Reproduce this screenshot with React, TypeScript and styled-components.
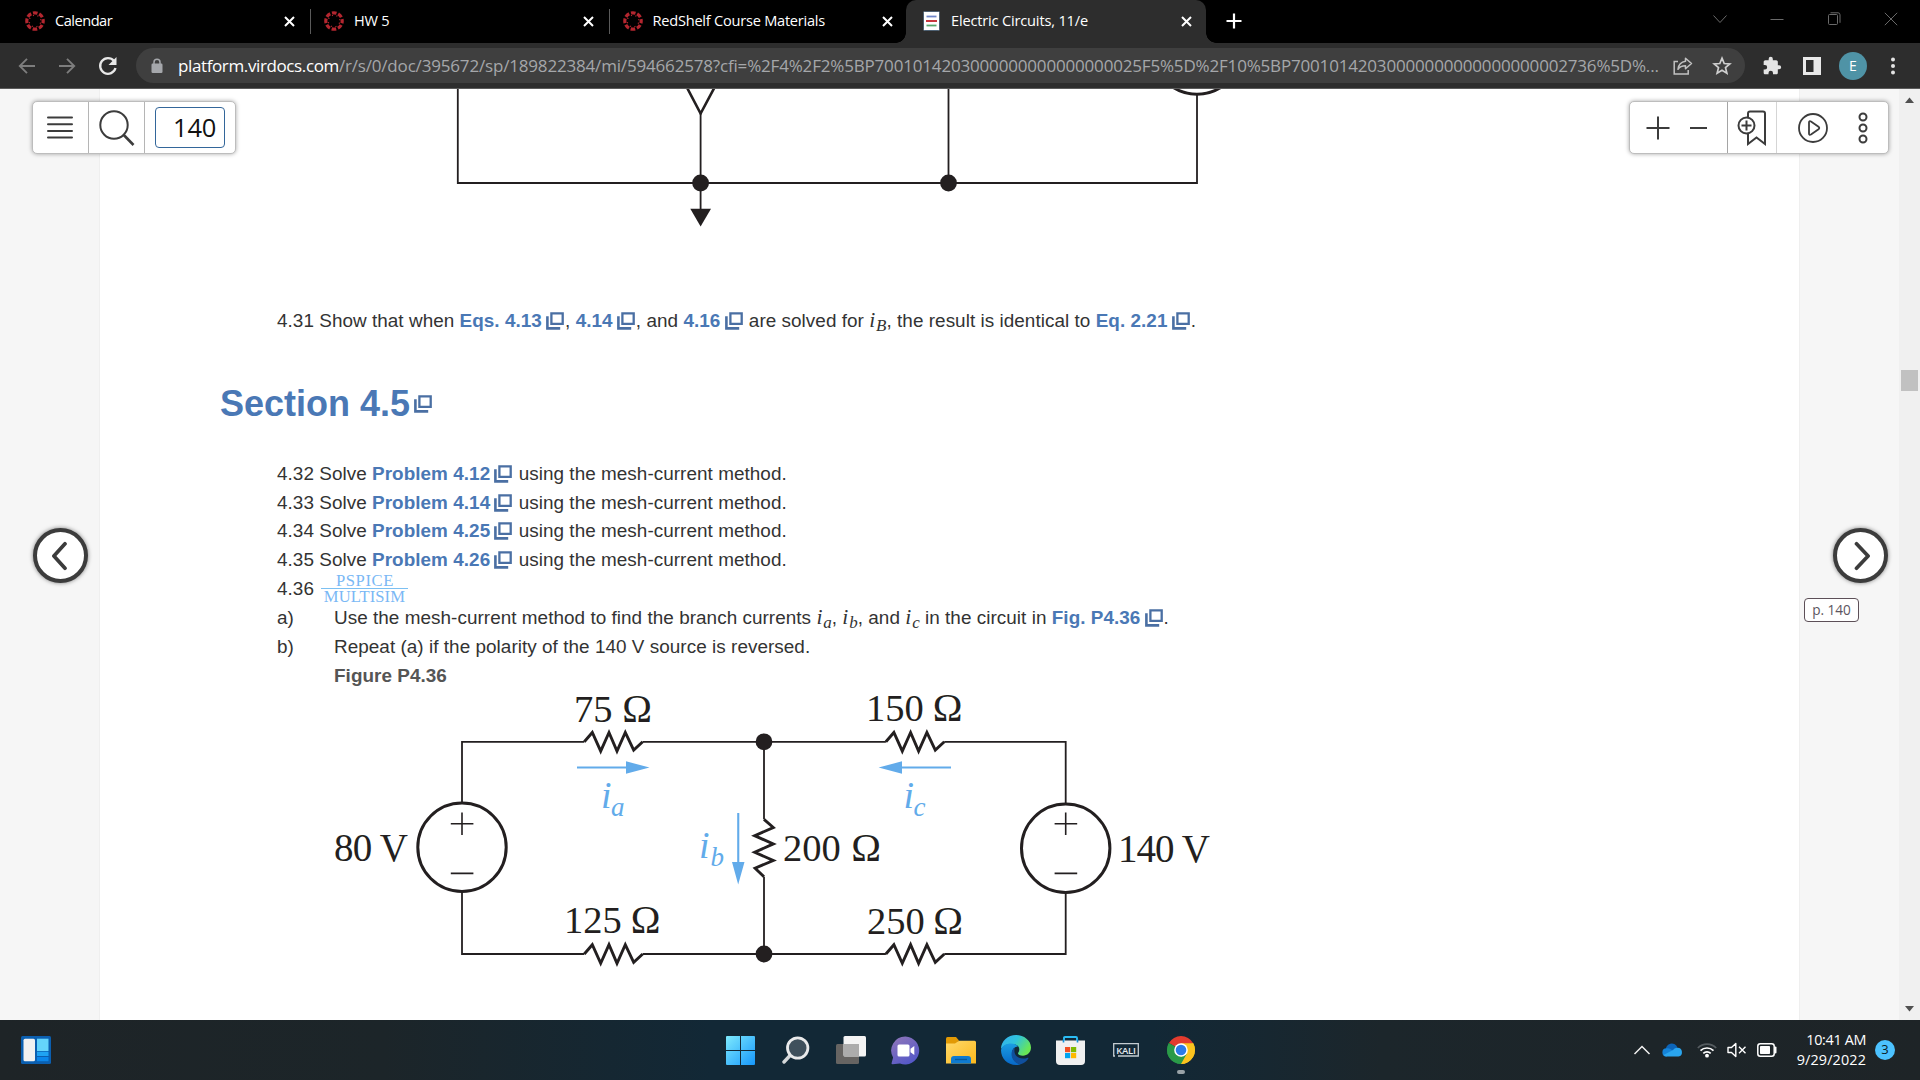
import React from "react";
import styled, { createGlobalStyle } from "styled-components";

const uiFont = `"Open Sans", "Noto Sans", sans-serif`;
const bookFont = `"Liberation Sans", Arial, sans-serif`;
const mathFont = `"Liberation Serif", "Times New Roman", serif`;
const ink = "#231f20";
const sky = "#62abea";

const Global = createGlobalStyle`
  * { box-sizing: border-box; }
  body { margin: 0; background: #fff; overflow: hidden; }
  svg { display: block; flex: none; }
`;

const Screen = styled.div`
  display: grid;
  grid-template-rows: 43px 46px 931px 60px;
  width: 1920px;
  height: 1080px;
  font-family: ${uiFont};
`;

/* ---------- browser tabs ---------- */

const TabStrip = styled.div`
  display: flex;
  background: #000;
  color: #fff;
`;

const Tab = styled.div<{ $width: number; $active?: boolean; $pad: number; $end: number }>`
  display: flex;
  align-items: center;
  width: ${(p) => p.$width}px;
  height: 43px;
  padding: 0 ${(p) => p.$end}px 1px ${(p) => p.$pad}px;
  position: relative;
  background: ${(p) => (p.$active ? "#2d2d2d" : "transparent")};
  border-radius: 10px 10px 0 0;
  &::before, &::after {
    content: "";
    display: ${(p) => (p.$active ? "block" : "none")};
    position: absolute;
    bottom: 0;
    width: 10px;
    height: 10px;
  }
  &::before { left: -10px; background: radial-gradient(circle at 0 0, transparent 9.5px, #2d2d2d 10px); }
  &::after { right: -10px; background: radial-gradient(circle at 100% 0, transparent 9.5px, #2d2d2d 10px); }
`;

const TabTitle = styled.span<{ $gap: number; $ls: number }>`
  flex: 1;
  margin-left: ${(p) => p.$gap}px;
  padding-bottom: 2px;
  font-size: 14.6px;
  letter-spacing: ${(p) => p.$ls}px;
  white-space: nowrap;
`;

const TabLine = styled.i`
  width: 1px;
  height: 25px;
  margin-top: 9px;
  background: #5a5a5a;
`;

const NewTab = styled.div`
  display: flex;
  align-items: center;
  margin-left: 19.5px;
  padding-bottom: 1px;
  flex: 1;
`;

const WindowButtons = styled.div`
  display: flex;
  align-items: center;
  height: 37px;
  gap: 41px;
  padding-right: 22px;
  svg:last-child { margin-left: 2px; }
`;

/* ---------- address row ---------- */

const Toolbar = styled.div`
  display: flex;
  align-items: center;
  background: #2d2d2d;
  border-bottom: 1px solid #5b5b5b;
  padding: 0 19px 0 18px;
`;

const NavButtons = styled.div`
  display: flex;
  align-items: center;
  gap: 22px;
  width: 118px;
`;

const AddressBar = styled.div`
  display: flex;
  align-items: center;
  width: 1609px;
  height: 35px;
  border-radius: 17.5px;
  background: #3f3f3f;
  padding: 0 13px 0 15px;
`;

const Url = styled.div`
  flex: 1;
  margin-left: 15px;
  padding-bottom: 1px;
  font-size: 17px;
  white-space: nowrap;
  color: #a5a7aa;
`;

const Domain = styled.span`
  color: #fff;
  letter-spacing: -0.38px;
`;

const Path = styled.span`
  letter-spacing: -0.175px;
`;

const BarIcons = styled.div`
  display: flex;
  align-items: center;
  gap: 19px;
`;

const Extensions = styled.div`
  display: flex;
  align-items: center;
  flex: 1;
  margin-left: 17px;
  svg:nth-child(2) { margin-left: 21px; }
  svg:last-child { margin-left: 22.5px; }
`;

const Avatar = styled.div`
  display: flex;
  align-items: center;
  justify-content: center;
  width: 28px;
  height: 28px;
  margin-left: 18px;
  border-radius: 50%;
  background: #4f93a6;
  color: #fff;
  font: 14px ${uiFont};
`;

/* ---------- reader ---------- */

const Reader = styled.main`
  display: grid;
  grid-template-columns: 100px 1699px 100px 21px;
  position: relative;
  overflow: hidden;
`;

const Gutter = styled.div<{ $side: "left" | "right" }>`
  background: #f6f6f6;
  border-${(p) => (p.$side === "left" ? "right" : "left")}: 1px solid #efefef;
`;

const Page = styled.article`
  background: #fff;
  padding-left: 120px;
  font-family: ${bookFont};
  font-size: 18.9px;
  line-height: 28.7px;
  letter-spacing: 0.045px;
  color: #333;
`;

const TopFigure = styled.div`
  height: 217.5px;
  margin-left: 230px;
`;

const Problems = styled.div<{ $after: number }>`
  padding-left: 57px;
  margin-bottom: ${(p) => p.$after}px;
`;

const Row = styled.div`
  height: 28.7px;
  white-space: nowrap;
`;

const FractionRow = styled(Row)`
  height: 29.5px;
`;

const PartRow = styled(Row)`
  display: grid;
  grid-template-columns: 57px 1fr;
`;

const Heading = styled.h2`
  display: flex;
  align-items: center;
  height: 42px;
  margin: 0 0 35.2px;
  font-size: 36px;
  line-height: 42px;
  letter-spacing: 0;
  color: #4a78b5;
  svg { margin: 0 0 0 3.5px; }
`;

const Link = styled.a`
  color: #4a78b5;
  font-weight: bold;
  svg {
    display: inline-block;
    vertical-align: -3px;
    margin: 0 1px 0 4.2px;
  }
`;

const MathVar = styled.i`
  font-family: ${mathFont};
  font-size: 21.5px;
  line-height: 0;
  letter-spacing: 0.9px;
  sub {
    font-size: 17px;
    line-height: 0;
    vertical-align: -3.5px;
    letter-spacing: 0;
  }
`;

const Fraction = styled.span`
  display: inline-flex;
  flex-direction: column;
  align-items: center;
  width: 87px;
  height: 29px;
  margin-left: 7px;
  vertical-align: top;
  font-family: ${mathFont};
  color: #7ab8f5;
  font-size: 16.6px;
`;

const Numerator = styled.span`
  height: 15px;
  line-height: 12.4px;
  width: 100%;
  padding-left: 1px;
  text-align: center;
  letter-spacing: 0.6px;
  border-bottom: 1.3px solid #7cc0f2;
`;

const Denominator = styled.span`
  line-height: 15px;
  letter-spacing: 0.1px;
`;

const Caption = styled(Row)`
  height: 28px;
  line-height: 27.5px;
  padding-left: 57px;
  font-weight: bold;
  color: #555;
`;

const LowerFigure = styled.div`
  margin: -5.4px 0 0 110px;
`;

const Scroll = styled.div`
  display: flex;
  flex-direction: column;
  align-items: center;
  background: #f0f0f0;
  padding: 8px 0;
`;

const Thumb = styled.div`
  width: 17px;
  height: 21px;
  margin: 267px 0 auto;
  background: #c1c1c1;
`;

/* Panels floating above the page */
const Floating = styled.div<{ $left: number; $width: number }>`
  position: absolute;
  top: 12px;
  left: ${(p) => p.$left}px;
  display: flex;
  width: ${(p) => p.$width}px;
  height: 53px;
  background: #fff;
  border: 1px solid #bdbdbd;
  border-radius: 5px;
  box-shadow: 0 0 4px rgba(0, 0, 0, 0.35);
`;

const Cell = styled.div<{ $width: number; $line?: string; $gap?: number; $end?: number }>`
  display: flex;
  align-items: center;
  justify-content: center;
  gap: ${(p) => p.$gap ?? 0}px;
  width: ${(p) => p.$width}px;
  padding-right: ${(p) => p.$end ?? 0}px;
  border-right: ${(p) => (p.$line ? `1px solid ${p.$line}` : "0")};
`;

const PageInput = styled.div`
  width: 70px;
  height: 41px;
  padding-left: 17px;
  border: 1.5px solid #33669a;
  border-radius: 4px;
  font-size: 25.5px;
  line-height: 39px;
  letter-spacing: -0.2px;
  color: #111;
`;

const Turn = styled.div<{ $left: number }>`
  position: absolute;
  top: 439px;
  left: ${(p) => p.$left}px;
  width: 55px;
  height: 55px;
  display: flex;
  align-items: center;
  justify-content: center;
  background: #fff;
  border: 4px solid #3c3c3c;
  border-radius: 50%;
  box-shadow: 0 0 4px rgba(0, 0, 0, 0.5);
`;

const PageTag = styled.div`
  position: absolute;
  left: 1804px;
  top: 509px;
  width: 55px;
  height: 24px;
  border: 1px solid #5d5058;
  border-radius: 4px;
  background: #fff;
  color: #5d5560;
  font: 13.6px/22px ${uiFont};
  text-align: center;
`;

/* ---------- taskbar ---------- */

const Taskbar = styled.footer`
  display: grid;
  grid-template-columns: 713px 495px 1fr;
  align-items: center;
  background: linear-gradient(90deg, #1e2427 0, #1c2529 20%, #122836 37%, #122836 60%, #1c262b 72%, #1e2427 100%);
`;

const Widgets = styled.div`
  padding-left: 21px;
`;

const Apps = styled.div`
  display: grid;
  grid-template-columns: repeat(9, 55px);
  height: 60px;
`;

const AppSlot = styled.div`
  display: flex;
  align-items: center;
  justify-content: center;
  position: relative;
`;

const Running = styled.i`
  position: absolute;
  bottom: 6px;
  width: 8px;
  height: 4px;
  border-radius: 2px;
  background: #9aa3a8;
`;

const Tray = styled.div`
  display: flex;
  align-items: center;
  justify-content: flex-end;
  padding-right: 25px;
  color: #fff;
`;

const TrayGap = styled.i<{ $w: number }>`
  width: ${(p) => p.$w}px;
`;

const Clock = styled.div`
  display: flex;
  flex-direction: column;
  width: 88px;
  margin-right: 9px;
  font-size: 14.4px;
  line-height: 20px;
  text-align: right;
  white-space: nowrap;
`;

const ClockLine = styled.span<{ $ls: number }>`
  letter-spacing: ${(p) => p.$ls}px;
`;

const Count = styled.div`
  width: 20px;
  height: 20px;
  border-radius: 50%;
  background: #4cc2ff;
  color: #0b1c26;
  font: 13px/19px ${uiFont};
  text-align: center;
`;

/* ---------- drawings ---------- */

const Canvas = () => (
  <svg width="20" height="20" viewBox="0 0 20 20">
    <circle cx="10" cy="10" r="8.2" fill="none" stroke="#b3262f" strokeWidth="3.2" strokeDasharray="4.6 1.84" strokeDashoffset="2.3" />
    <circle cx="10" cy="10" r="5.8" fill="none" stroke="#b3262f" strokeWidth="1.2" strokeDasharray="1.1 3.455" strokeDashoffset="2.8" />
  </svg>
);

const Book = () => (
  <svg width="17" height="20" viewBox="0 0 17 20">
    <rect x=".5" y=".5" width="16" height="19" rx="1" fill="#fff" stroke="#4d6072" />
    <path d="M3.5 5.5h10" stroke="#6f86c9" strokeWidth="1.8" />
    <path d="M3 10h11" stroke="#c8373f" strokeWidth="2" />
    <path d="M3.5 14.5h10" stroke="#57a66d" strokeWidth="1.8" />
  </svg>
);

const Cross = () => (
  <svg width="11" height="11" viewBox="0 0 11 11">
    <path d="M1 1l9 9M10 1l-9 9" stroke="#fff" strokeWidth="2" />
  </svg>
);

const Popup = () => (
  <svg width="18" height="18" viewBox="0 0 18 18">
    <path d="M5.4 1.3h11.3v10.6H5.4z" fill="none" stroke="#4a6fa3" strokeWidth="2.3" />
    <path d="M1.4 4.2v12.2h12.8" fill="none" stroke="#4a6fa3" strokeWidth="2.6" />
  </svg>
);

const Upper = () => (
  <svg width="780" height="145" viewBox="450 89 780 145" fill="none" stroke={ink}>
    <path d="M457.800 80V183H1197V94M700.6 113V215M948.5 80V183" strokeWidth="1.8" />
    <path d="M683 80L700.6 113.5L718.5 80" strokeWidth="2.6" />
    <circle cx="1197" cy="49.7" r="44.5" strokeWidth="3" />
    <g fill={ink} stroke="none">
      <circle cx="700.6" cy="183" r="8.4" />
      <circle cx="948.5" cy="183" r="8.4" />
      <path d="M690.3 208.7H711L700.6 226.5z" />
    </g>
  </svg>
);

const zigH = (x: number, y: number) =>
  `M${x} ${y}l8 -9.3l8.4 18.6l8.3 -18.6l8 18.6l8.3 -18.6l8.4 17.6l9 -8.3`;

const Ohms = ({ x, end, y, value }: { x: number; end: number; y: number; value: string }) => (
  <text y={y}>
    <tspan x={x} fontSize="38.500">{value} </tspan>
    <tspan x={end} textAnchor="end" fontSize="40">Ω</tspan>
  </text>
);

const Lower = () => (
  <svg width="890" height="296" viewBox="330 684 890 296">
    <g fill="none" stroke={ink} strokeWidth="1.8">
      <path d="M584.3 741.8H462V802M462 891.5V954H584.3M642.7 741.8H885.9M642.7 954H885.9M944.3 741.8H1065.7V803M1065.7 893V954H944.3" />
      <path d="M764 741.8V819.3M764 876.7V954" />
      <path d="M450.8 823.7H473.4M462 812.4V835M450.8 873.4H473.4M1054.6 823.7H1077.2M1065.7 812.4V835M1054.6 873.4H1077.2" strokeWidth="1.6" />
    </g>
    <g fill="none" stroke={ink} strokeWidth="2.9" strokeLinejoin="miter">
      <path d={zigH(584.3, 741.8)} />
      <path d={zigH(885.9, 741.8)} />
      <path d={zigH(584.3, 954)} />
      <path d={zigH(885.9, 954)} />
      <path d="M764 819.3l9.3 8.2l-18.6 8.2l18.6 8.2l-18.6 8.4l18.6 8.2l-18.2 7.7l8.9 8.5" />
      <circle cx="462" cy="847.3" r="44.2" strokeWidth="3" />
      <circle cx="1065.7" cy="848.3" r="44.2" strokeWidth="3" />
    </g>
    <circle cx="764" cy="741.8" r="8.4" fill={ink} />
    <circle cx="764" cy="954" r="8.4" fill={ink} />
    <g fill={sky}>
      <path d="M577 766.5H626V761.3L649.5 767.5L626 773.8V768.6H577z" />
      <path d="M951 766.5H902V761.3L878.6 767.5L902 773.8V768.6H951z" />
      <path d="M737.2 813V862H732L738.2 884.5L744.5 862H739.3V813z" />
    </g>
    <g fill={ink} fontFamily={mathFont} fontSize="39">
      <Ohms x={574} end={652} y={721.5} value="75" />
      <Ohms x={866} end={962.5} y={721.3} value="150" />
      <Ohms x={564} end={660.5} y={933.3} value="125" />
      <Ohms x={867} end={963} y={934} value="250" />
      <Ohms x={783} end={881} y={860.7} value="200" />
      <text x="334" y="861" textLength="74" lengthAdjust="spacing">80 V</text>
      <text x="1118" y="862.3" textLength="92" lengthAdjust="spacing">140 V</text>
    </g>
    <g fill={sky} fontFamily={mathFont} fontStyle="italic" fontSize="38">
      <text x="601" y="808">i</text>
      <text x="903.5" y="808">i</text>
      <text x="699" y="858">i</text>
      <g fontSize="27">
        <text x="611" y="815.8">a</text>
        <text x="913.5" y="815.8">c</text>
        <text x="710.5" y="865.5">b</text>
      </g>
    </g>
  </svg>
);

const appIcons: React.ReactNode[] = [
  <svg key="win" width="29" height="29" viewBox="0 0 29 29">
    <defs>
      <linearGradient id="w" gradientUnits="userSpaceOnUse" x1="0" y1="0" x2="29" y2="29">
        <stop offset="0" stopColor="#7eeafd" /><stop offset="1" stopColor="#1697fb" />
      </linearGradient>
    </defs>
    <path d="M0 1q0-1 1-1h13v14H0zM15 0h13q1 0 1 1v13H15zM0 15h14v14H1q-1 0-1-1zM15 15h14v13q0 1-1 1H15z" fill="url(#w)" />
  </svg>,
  <svg key="search" width="28" height="28" viewBox="0 0 28 28">
    <path d="M8.5 19L2 26" stroke="#d5d8da" strokeWidth="3.4" strokeLinecap="round" />
    <circle cx="15.7" cy="12" r="10.2" fill="#3f505c" stroke="#e9eaeb" strokeWidth="2.8" />
  </svg>,
  <svg key="view" width="30" height="28" viewBox="0 0 30 28">
    <rect x="0" y="8" width="23" height="20" rx="1.5" fill="#666462" />
    <rect x="7.5" y="0" width="22.5" height="20.5" rx="1.5" fill="#f4f4f4" />
    <path d="M7.5 8H23v12.5H9q-1.500 0-1.500-1.500z" fill="#acacac" />
  </svg>,
  <svg key="chat" width="29" height="29" viewBox="0 0 29 29">
    <defs>
      <linearGradient id="c" x1="0" y1="0" x2=".6" y2="1">
        <stop offset="0" stopColor="#9277b8" /><stop offset="1" stopColor="#5558c8" />
      </linearGradient>
    </defs>
    <path d="M14.500 .5a14 14 0 1 1-5.500 27L1.500 28.300q-1.200 0-.9-1.300l1.500-5.500A14 14 0 0 1 14.500 .5z" fill="url(#c)" />
    <rect x="6.500" y="8.500" width="12" height="12" rx="1.500" fill="#fff" />
    <path d="M19.500 12.800l3.800-2.800v9l-3.800-2.800z" fill="#fff" />
  </svg>,
  <svg key="files" width="30" height="27" viewBox="0 0 30 27">
    <defs>
      <linearGradient id="f" x1="0" y1="0" x2="1" y2="1">
        <stop offset="0" stopColor="#ffd96b" /><stop offset="1" stopColor="#fcb91c" />
      </linearGradient>
    </defs>
    <path d="M0 7V1.500Q0 0 1.500 0H10l3 3.500L10 7z" fill="#e29a05" />
    <path d="M0 6.500H9L13 3.800H28.500Q30 3.800 30 5.300V26.500H0z" fill="url(#f)" />
    <path d="M5 26.500V22q0-3 3-3H22q3 0 3 3v4.500z" fill="#0f7bd0" />
    <path d="M9 22.500H21" stroke="#075a9c" strokeWidth="1.300" />
  </svg>,
  <svg key="edge" width="30" height="30" viewBox="0 0 30 30">
    <defs>
      <linearGradient id="e1" x1="0" y1="0" x2="1" y2=".5">
        <stop offset="0" stopColor="#35aef0" /><stop offset=".5" stopColor="#2fc3dc" /><stop offset="1" stopColor="#69e655" />
      </linearGradient>
      <linearGradient id="e2" x1="0" y1="0" x2="0" y2="1">
        <stop offset="0" stopColor="#1b9de2" /><stop offset="1" stopColor="#0768c8" />
      </linearGradient>
    </defs>
    <path d="M0 14C0 6 7 0 15 0s15 5.500 15 12.500c0 5-4 8.200-8 8.200-3 0-5-1-5-2.200 0-1 1.300-1.600 1.300-4.300 0-3.200-3.300-5.200-7.300-5.200-5 0-9 2-11 5z" fill="url(#e1)" />
    <path d="M0 15C1 10.500 5.500 8.500 10 8.500c3.200 0 5.500 1 7 3-3.500 0-6 3-6 7 0 6 5 10.500 9 10.700-1.500.5-3 .8-5 .8C6.500 30 0 23.500 0 15z" fill="url(#e2)" />
    <path d="M13.500 12.500c-2 1.500-3 4-3 6.500 0 6 5 10.800 10 10 3-1 5.500-3.300 6.800-5.500.5-.8-.2-1-.8-.8-6 2.500-12.500-.5-13-5.700-.1-1.700 0-3.200 0-4.500z" fill="#104f9c" />
  </svg>,
  <svg key="store" width="29" height="29" viewBox="0 0 29 29">
    <path d="M8 6V2q0-1 1-1H20q1 0 1 1V6" fill="none" stroke="#2bbdf5" strokeWidth="1.900" />
    <path d="M0 4.500H29V25q0 4-4 4H4q-4 0-4-4z" fill="#f0f0f0" />
    <path d="M7.500 3.500V6.500M21.500 3.500V6.500" stroke="#1392d8" strokeWidth="1.600" />
    <path d="M9 11h5.200v5.200H9z" fill="#f25022" /><path d="M15 11h5.200v5.200H15z" fill="#7fba00" />
    <path d="M9 17h5.200v5.200H9z" fill="#00a4ef" /><path d="M15 17h5.200v5.200H15z" fill="#ffb900" />
  </svg>,
  <svg key="kali" width="26" height="14" viewBox="0 0 26 14">
    <path d="M2 13H.7V.7H25.300V13H5" fill="none" stroke="#c4ccd1" strokeWidth="1.300" />
    <text x="3.300" y="10.500" textLength="19.500" fontFamily={uiFont} fontWeight="600" fontSize="9.500" fill="#e6ebee">KALI</text>
  </svg>,
  <svg key="chrome" width="28" height="28" viewBox="0 0 28 28">
    <path d="M14 14L1.900 7A14 14 0 0 1 26.100 7z" fill="#e33b2e" />
    <path d="M14 14L26.100 7A14 14 0 0 1 14 28z" fill="#fcc31e" />
    <path d="M14 14L14 28A14 14 0 0 1 1.900 7z" fill="#2a9a48" />
    <path d="M14 7.200H26.200A14 14 0 0 1 14 28L19.900 17.400z" fill="#fcc31e" />
    <path d="M1.900 7L8.100 17.400L14 20.800L19.900 17.400L14 28A14 14 0 0 1 1.900 7z" fill="#2a9a48" />
    <circle cx="14" cy="14" r="6.800" fill="#fff" />
    <circle cx="14" cy="14" r="5.300" fill="#2c7be8" />
  </svg>,
];

const solveRows = [
  ["4.32", "4.12"],
  ["4.33", "4.14"],
  ["4.34", "4.25"],
  ["4.35", "4.26"],
];

export default function App() {
  return (
    <Screen>
      <Global />
      <TabStrip>
        <Tab $width={310} $pad={25} $end={15}><Canvas /><TabTitle $gap={10} $ls={-0.5}>Calendar</TabTitle><Cross /></Tab>
        <TabLine />
        <Tab $width={298} $pad={13} $end={15}><Canvas /><TabTitle $gap={10} $ls={-0.25}>HW 5</TabTitle><Cross /></Tab>
        <TabLine />
        <Tab $width={296} $pad={13} $end={13}><Canvas /><TabTitle $gap={9.5} $ls={-0.24}>RedShelf Course Materials</TabTitle><Cross /></Tab>
        <Tab $width={300} $pad={17} $end={14} $active><Book /><TabTitle $gap={11} $ls={-0.18}>Electric Circuits, 11/e</TabTitle><Cross /></Tab>
        <NewTab>
          <svg width="16" height="16" viewBox="0 0 16 16"><path d="M8 .5v15M.5 8h15" stroke="#fff" strokeWidth="2.200" /></svg>
        </NewTab>
        <WindowButtons>
          <svg width="14" height="14" viewBox="0 0 14 14"><path d="M.5 3.500L7 10.500L13.500 3.500" fill="none" stroke="#6a6a6a" /></svg>
          <svg width="18" height="14" viewBox="0 0 18 14"><path d="M2.500 7.500h13" stroke="#6a6a6a" /></svg>
          <svg width="14" height="14" viewBox="0 0 14 14"><path d="M1.500 3.500q0-1 1-1h7q1 0 1 1v8q0 1-1 1h-7q-1 0-1-1zM3.500 .8H11q2 0 2 2v8" fill="none" stroke="#6a6a6a" /></svg>
          <svg width="14" height="14" viewBox="0 0 14 14"><path d="M.8.800l12.400 12.400M13.200.800L.8 13.200" stroke="#6a6a6a" /></svg>
        </WindowButtons>
      </TabStrip>

      <Toolbar>
        <NavButtons>
          <svg width="18" height="18" viewBox="0 0 18 18"><path d="M17 9H2M9 1.800L1.800 9L9 16.200" fill="none" stroke="#7d7d7d" strokeWidth="1.900" /></svg>
          <svg width="18" height="18" viewBox="0 0 18 18"><path d="M1 9h15M9 1.800L16.200 9L9 16.200" fill="none" stroke="#7d7d7d" strokeWidth="1.900" /></svg>
          <svg width="20" height="20" viewBox="0 0 20 20">
            <path d="M16 5A7.800 7.800 0 1 0 17.500 12" fill="none" stroke="#e8e8e8" strokeWidth="2.300" />
            <path d="M18.500 1V9H10.500z" fill="#e8e8e8" />
          </svg>
        </NavButtons>
        <AddressBar>
          <svg width="12" height="16" viewBox="0 0 12 16">
            <path d="M3 7V4.200a3 3 0 0 1 6 0V7" fill="none" stroke="#a5a7ab" strokeWidth="1.500" />
            <rect x=".5" y="5.500" width="11" height="9.500" rx="1.200" fill="#a5a7ab" />
          </svg>
          <Url>
            <Domain>platform.virdocs.com</Domain>
            <Path>/r/s/0/doc/395672/sp/189822384/mi/594662578?cfi=%2F4%2F2%5BP7001014203000000000000000025F5%5D%2F10%5BP70010142030000000000000000002736%5D%...</Path>
          </Url>
          <BarIcons>
            <svg width="20" height="18" viewBox="0 0 20 18">
              <path d="M5 4.500H1.200V17H15.200V13" fill="none" stroke="#c2c2c2" strokeWidth="1.500" />
              <path d="M12.500 1.200L18.500 6.500L12.500 11.800V8.800C9 8.800 6.500 10 5 12.300C5.500 8 8 4.900 12.500 4.300z" fill="none" stroke="#c2c2c2" strokeWidth="1.500" strokeLinejoin="round" />
            </svg>
            <svg width="20" height="20" viewBox="0 0 20 20">
              <path d="M10 2.200L12.200 7.500L17.800 7.900L13.500 11.600L14.900 17.200L10 14.200L5.100 17.200L6.500 11.600L2.200 7.900L7.800 7.500z" fill="none" stroke="#cfcfcf" strokeWidth="1.700" />
            </svg>
          </BarIcons>
        </AddressBar>
        <Extensions>
          <svg width="20" height="20" viewBox="0 0 24 24">
            <path fill="#e4e4e4" d="M20.500 11H19V7c0-1.100-.9-2-2-2h-4V3.500a2.500 2.500 0 0 0-5 0V5H4c-1.100 0-2 .9-2 2v3.800h1.500a2.700 2.700 0 0 1 0 5.400H2V20c0 1.100.9 2 2 2h3.800v-1.500a2.700 2.700 0 0 1 5.400 0V22H17c1.100 0 2-.9 2-2v-4h1.500a2.500 2.500 0 0 0 0-5z" />
          </svg>
          <svg width="18" height="18" viewBox="0 0 18 18"><path fillRule="evenodd" d="M0 0H18V18H0zM3 3V15H10.500V3z" fill="#e8e8e8" /></svg>
          <Avatar>E</Avatar>
          <svg width="6" height="18" viewBox="0 0 6 18" fill="#e4e4e4"><circle cx="3" cy="2.500" r="2" /><circle cx="3" cy="9" r="2" /><circle cx="3" cy="15.500" r="2" /></svg>
        </Extensions>
      </Toolbar>

      <Reader>
        <Gutter $side="left" />
        <Page>
          <TopFigure><Upper /></TopFigure>
          <Problems $after={47.5}>
            <Row>
              4.31 Show that when <Link>Eqs. 4.13<Popup /></Link>, <Link>4.14<Popup /></Link>, and <Link>4.16<Popup /></Link> are solved for{" "}
              <MathVar>i<sub>B</sub></MathVar>, the result is identical to <Link>Eq. 2.21<Popup /></Link>.
            </Row>
          </Problems>
          <Heading>Section 4.5<Popup /></Heading>
          <Problems $after={0}>
            {solveRows.map(([n, ref]) => (
              <Row key={n}>
                {n} Solve <Link>Problem {ref}<Popup /></Link> using the mesh-current method.
              </Row>
            ))}
            <FractionRow>
              4.36
              <Fraction><Numerator>PSPICE</Numerator><Denominator>MULTISIM</Denominator></Fraction>
            </FractionRow>
            <PartRow>
              <span>a)</span>
              <span>
                Use the mesh-current method to find the branch currents <MathVar>i<sub>a</sub></MathVar>, <MathVar>i<sub>b</sub></MathVar>, and{" "}
                <MathVar>i<sub>c</sub></MathVar> in the circuit in <Link>Fig. P4.36<Popup /></Link>.
              </span>
            </PartRow>
            <PartRow>
              <span>b)</span>
              <span>Repeat (a) if the polarity of the 140 V source is reversed.</span>
            </PartRow>
            <Caption>Figure P4.36</Caption>
          </Problems>
          <LowerFigure><Lower /></LowerFigure>
        </Page>
        <Gutter $side="right" />
        <Scroll>
          <svg width="9" height="6" viewBox="0 0 9 6"><path d="M0 6L4.500 .5L9 6z" fill="#505050" /></svg>
          <Thumb />
          <svg width="9" height="6" viewBox="0 0 9 6"><path d="M0 0L4.500 5.500L9 0z" fill="#505050" /></svg>
        </Scroll>

        <Floating $left={32} $width={204}>
          <Cell $width={56} $line="#b5b5b5" $end={2}>
            <svg width="26" height="23" viewBox="0 0 26 23"><path d="M1 1.500H25M1 8.200H25M1 14.900H25M1 21.600H25" stroke="#3c3c3c" strokeWidth="2" strokeLinecap="round" /></svg>
          </Cell>
          <Cell $width={56} $line="#b5b5b5">
            <svg width="36" height="36" viewBox="0 0 36 36"><circle cx="15" cy="15" r="13.700" fill="none" stroke="#3c3c3c" strokeWidth="2" /><path d="M24.800 25L34.500 35" stroke="#3c3c3c" strokeWidth="2.600" /></svg>
          </Cell>
          <Cell $width={90}><PageInput>140</PageInput></Cell>
        </Floating>

        <Floating $left={1629} $width={260}>
          <Cell $width={98} $line="#a5a5a5" $gap={20.5} $end={4.5}>
            <svg width="24" height="24" viewBox="0 0 24 24"><path d="M12 .5v23M.5 12h23" stroke="#3c3c3c" strokeWidth="2" /></svg>
            <svg width="17" height="24" viewBox="0 0 17 24"><path d="M0 12h17" stroke="#3c3c3c" strokeWidth="2" /></svg>
          </Cell>
          <Cell $width={49} $line="#d5d5d5">
            <svg width="30" height="36" viewBox="0 0 30 36" fill="none" stroke="#3c3c3c" strokeWidth="2">
              <path d="M11 7V3.500Q11 1.500 13 1.500H26Q28 1.500 28 3.500V34L19.500 27.500L11 34V24" />
              <circle cx="9.500" cy="15.500" r="8" fill="#fff" />
              <path d="M9.500 10.500v10M4.500 15.500h10" />
            </svg>
          </Cell>
          <Cell $width={111} $gap={30}>
            <svg width="30" height="30" viewBox="0 0 30 30" fill="none" stroke="#3c3c3c" strokeWidth="1.800">
              <circle cx="15" cy="15" r="14" />
              <path d="M11 9.500Q11 7.500 13 8.500L20.500 13.700Q22 15 20.500 16.300L13 21.500Q11 22.500 11 20.500z" />
            </svg>
            <svg width="10" height="32" viewBox="0 0 10 32" fill="none" stroke="#3c3c3c" strokeWidth="2"><circle cx="5" cy="5" r="3.500" /><circle cx="5" cy="16" r="3.500" /><circle cx="5" cy="27" r="3.500" /></svg>
          </Cell>
        </Floating>

        <Turn $left={33}>
          <svg width="18" height="30" viewBox="0 0 18 30"><path d="M13 2.800L1.900 15L13 27.200" fill="none" stroke="#3c3c3c" strokeWidth="3.700" strokeLinecap="round" strokeLinejoin="round" /></svg>
        </Turn>
        <Turn $left={1833}>
          <svg width="18" height="30" viewBox="0 0 18 30"><path d="M4.500 2.800L16.100 15L4.500 27.200" fill="none" stroke="#3c3c3c" strokeWidth="3.700" strokeLinecap="round" strokeLinejoin="round" /></svg>
        </Turn>
        <PageTag>p. 140</PageTag>
      </Reader>

      <Taskbar>
        <Widgets>
          <svg width="30" height="28" viewBox="0 0 30 28">
            <rect width="30" height="28" rx="1.500" fill="#0b5fb0" />
            <rect x="2.500" y="2.700" width="11.500" height="22.500" rx="1.500" fill="#f1f1f1" />
            <path d="M16 2.700H27.500V15H16z" fill="#65d4fb" /><path d="M16 15.700H27.500V20H16z" fill="#1fa3f3" /><path d="M16 21H27.500V25.200H16z" fill="#0b86ea" />
          </svg>
        </Widgets>
        <Apps>
          {appIcons.map((icon, i) => (
            <AppSlot key={i}>{icon}{i === 8 && <Running />}</AppSlot>
          ))}
        </Apps>
        <Tray>
          <svg width="18" height="12" viewBox="0 0 18 12"><path d="M1.500 10L9 2.500L16.500 10" fill="none" stroke="#f0f0f0" strokeWidth="1.500" /></svg>
          <TrayGap $w={11} />
          <svg width="21" height="14" viewBox="0 0 21 14">
            <path d="M4 8A5.800 5.800 0 0 1 15.500 5L12 10z" fill="#0c64b8" />
            <path d="M4.500 13.500A4 4 0 0 1 4.500 5.300Q8 4.500 12 9z" fill="#1583d8" />
            <path d="M15.500 4.800a4.400 4.400 0 0 1 1 8.700H4.500Q2.500 13.500 1.500 12L11 7Q12.500 4.800 15.500 4.800z" fill="#2aa5ee" />
          </svg>
          <TrayGap $w={14} />
          <svg width="20" height="16" viewBox="0 0 20 16" fill="none" strokeWidth="1.700">
            <path d="M.8 6A13 13 0 0 1 19.200 6" stroke="#555c60" />
            <path d="M3.500 8.700A9.200 9.200 0 0 1 16.500 8.700M6.300 11.400A5.300 5.300 0 0 1 13.700 11.400" stroke="#fff" />
            <circle cx="10" cy="13.700" r="1.900" fill="#fff" />
          </svg>
          <TrayGap $w={10} />
          <svg width="20" height="16" viewBox="0 0 20 16" fill="none" stroke="#fff" strokeWidth="1.400">
            <path d="M1 5.500H4.500L8.800 1.500V14.500L4.500 10.500H1z" strokeLinejoin="round" />
            <path d="M12 4.800l6.500 6.500M18.500 4.800L12 11.300" />
          </svg>
          <TrayGap $w={10} />
          <svg width="21" height="14" viewBox="0 0 21 14">
            <rect x=".8" y=".8" width="16.400" height="12.400" rx="2.500" fill="none" stroke="#fff" strokeWidth="1.500" />
            <rect x="3" y="3" width="10" height="8" rx=".8" fill="#fff" />
            <path d="M18.500 4.500v5" stroke="#fff" strokeWidth="2" strokeLinecap="round" />
          </svg>
          <Clock><ClockLine $ls={-0.35}>10:41 AM</ClockLine><ClockLine $ls={0.12}>9/29/2022</ClockLine></Clock>
          <Count>3</Count>
        </Tray>
      </Taskbar>
    </Screen>
  );
}
